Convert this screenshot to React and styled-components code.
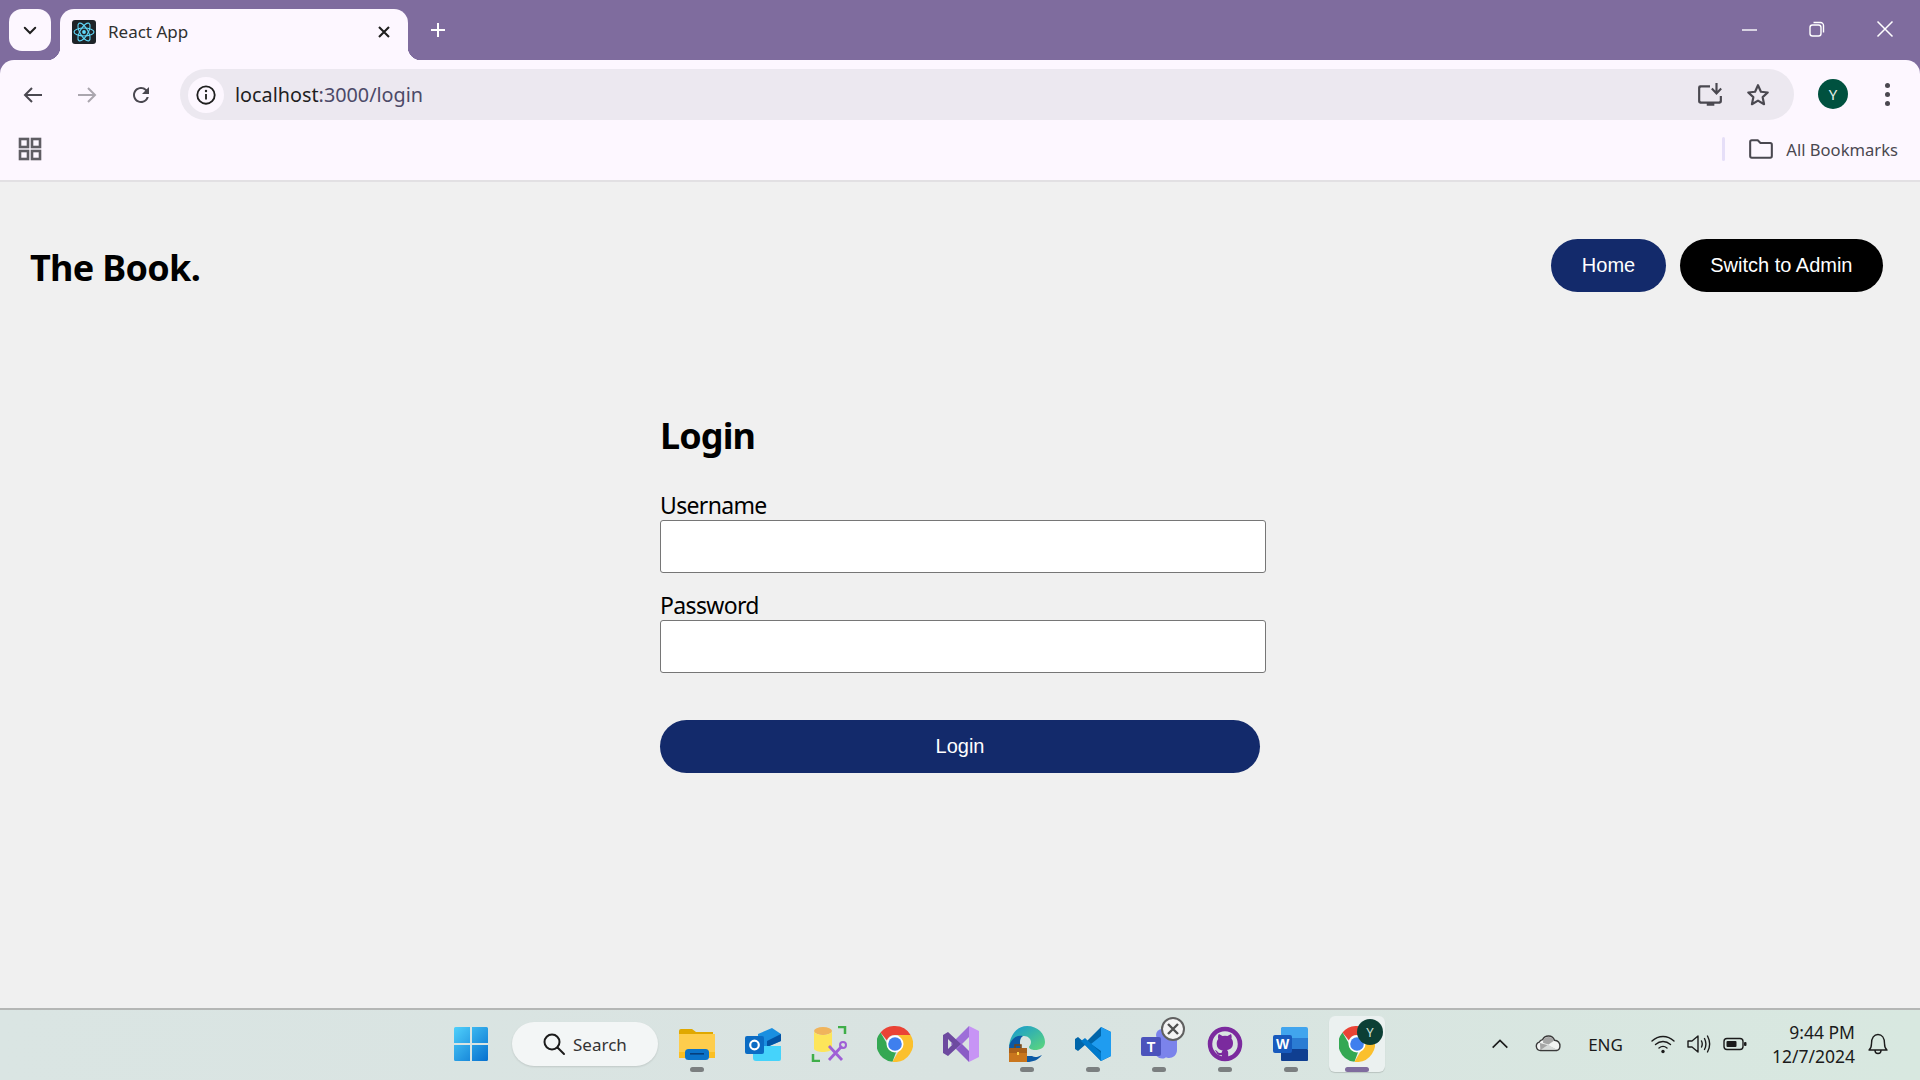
import React from 'react'
import styled, { createGlobalStyle } from 'styled-components'

const UI = `"Noto Sans", "Open Sans", sans-serif`
const ARIAL = `"Liberation Sans", Arial, sans-serif`

const GlobalStyle = createGlobalStyle`
  html, body { margin: 0; padding: 0; height: 100%; }
  body { font-family: ${UI}; background: #f0f0f0; overflow: hidden; }
  #root { height: 100%; }
  * { box-sizing: border-box; }
`

const Ico = ({ size = 24, vb = '0 0 24 24', fill = 'currentColor', children, ...rest }) => (
  <svg width={size} height={size} viewBox={vb} fill={fill} {...rest}>{children}</svg>
)

const App = () => (
  <>
    <GlobalStyle />
    <Screen>
      <TabStrip>
        <TabSearch>
          <Ico size={18} fill="none" stroke="#1f1f1f" strokeWidth="2.6" strokeLinecap="round"><path d="M5 9l7 7 7-7" /></Ico>
        </TabSearch>
        <Tab>
          <Favicon>
            <Ico size={24} fill="none" stroke="#61dafb" strokeWidth="1.1">
              <circle cx="12" cy="12" r="1.9" fill="#61dafb" stroke="none" />
              <ellipse cx="12" cy="12" rx="10" ry="4" />
              <ellipse cx="12" cy="12" rx="10" ry="4" transform="rotate(60 12 12)" />
              <ellipse cx="12" cy="12" rx="10" ry="4" transform="rotate(120 12 12)" />
            </Ico>
          </Favicon>
          <TabTitle>React App</TabTitle>
          <TabClose>
            <Ico size={16} vb="0 0 16 16" fill="none" stroke="#1f1f1f" strokeWidth="2.1"><path d="M3 3l10 10M13 3L3 13" /></Ico>
          </TabClose>
        </Tab>
        <NewTab>
          <Ico size={20} vb="0 0 20 20" fill="none" stroke="#fff" strokeWidth="2"><path d="M10 3v14M3 10h14" /></Ico>
        </NewTab>
        <WinControls>
          <WinBtn><Ico size={18} vb="0 0 18 18" fill="none" stroke="#fff" strokeWidth="1.4"><path d="M2 10h15" /></Ico></WinBtn>
          <WinBtn><Ico size={18} vb="0 0 18 18" fill="none" stroke="#fff" strokeWidth="1.4"><rect x="2" y="5" width="11" height="11" rx="2.5" /><path d="M5.5 2.5h7a3 3 0 013 3v7" /></Ico></WinBtn>
          <WinBtn><Ico size={18} vb="0 0 18 18" fill="none" stroke="#fff" strokeWidth="1.5"><path d="M1.5 1.5l15 15M16.5 1.5l-15 15" /></Ico></WinBtn>
        </WinControls>
      </TabStrip>

      <Toolbar>
        <NavIcon><Ico size={24} fill="none" stroke="#4a4850" strokeWidth="2"><path d="M21 12H4M11 5l-7 7 7 7" /></Ico></NavIcon>
        <NavIcon><Ico size={24} fill="none" stroke="#aaa6ae" strokeWidth="2"><path d="M3 12h17M13 5l7 7-7 7" /></Ico></NavIcon>
        <NavIcon><Ico size={24} fill="#4a4850"><path d="M17.65 6.35A7.958 7.958 0 0012 4c-4.42 0-7.99 3.58-7.99 8s3.57 8 7.99 8c3.73 0 6.84-2.55 7.73-6h-2.08A5.99 5.99 0 0112 18c-3.31 0-6-2.69-6-6s2.69-6 6-6c1.66 0 3.14.69 4.22 1.78L13 11h7V4l-2.35 2.35z" /></Ico></NavIcon>
        <Omnibox>
          <SiteInfo>
            <Ico size={22} fill="none" stroke="#1f1f1f" strokeWidth="2"><circle cx="12" cy="12" r="9.5" /><path d="M12 11v6" /><circle cx="12" cy="7.6" r="1.3" fill="#1f1f1f" stroke="none" /></Ico>
          </SiteInfo>
          <Url>localhost<UrlRest>:3000/login</UrlRest></Url>
          <OmniActions>
            <Ico size={26} fill="#4a4850">
              <path d="M3 3h9v2H4a1 1 0 00-1 1v11a1 1 0 001 1h16a1 1 0 001-1v-4h2v5a2 2 0 01-2 2h-5v2H9v-2H3a2 2 0 01-2-2V5a2 2 0 012-2z" />
              <path d="M17 1h2v7l2.6-2.6L23 6.8 18 12l-5-5.2 1.4-1.4L17 8z" />
            </Ico>
            <Ico size={26} fill="none" stroke="#4a4850" strokeWidth="2" strokeLinejoin="round"><path d="M12 3l2.7 6 6.3.7-4.700 4.300 1.300 6.500L12 17.200 6.400 20.500l1.300-6.500L3 9.700 9.300 9z" /></Ico>
          </OmniActions>
        </Omnibox>
        <Avatar>Y</Avatar>
        <MoreDots><i /><i /><i /></MoreDots>
      </Toolbar>

      <BookmarkBar>
        <Ico size={24} fill="none" stroke="#5f5d63" strokeWidth="2.6"><rect x="2" y="2" width="8" height="8" /><rect x="14" y="2" width="8" height="8" /><rect x="2" y="14" width="8" height="8" /><rect x="14" y="14" width="8" height="8" /></Ico>
        <BarDivider />
        <Ico size={26} fill="none" stroke="#4a4850" strokeWidth="1.9" strokeLinejoin="round"><path d="M2 5.500A1.500 1.500 0 013.500 4H9l2.500 2.500h9A1.500 1.500 0 0122 8v10.500a1.500 1.500 0 01-1.500 1.500h-17A1.500 1.500 0 012 18.500z" /></Ico>
        <AllBookmarks>All Bookmarks</AllBookmarks>
      </BookmarkBar>

      <Page>
        <Header>
          <Logo>The Book.</Logo>
          <HeaderNav>
            <PillButton $bg="#132a6b">Home</PillButton>
            <PillButton $bg="#000">Switch to Admin</PillButton>
          </HeaderNav>
        </Header>
        <LoginForm onSubmit={e => e.preventDefault()}>
          <Title>Login</Title>
          <Field>
            <FieldLabel htmlFor="username">Username</FieldLabel>
            <FieldInput id="username" type="text" />
          </Field>
          <Field>
            <FieldLabel htmlFor="password">Password</FieldLabel>
            <FieldInput id="password" type="password" />
          </Field>
          <SubmitButton type="submit">Login</SubmitButton>
        </LoginForm>
      </Page>

      <Taskbar>
        <Pinned>
          <Slot>
            <Ico size={36} vb="0 0 36 36" fill="none">
              <defs><linearGradient id="win" x1="0" y1="0" x2="1" y2="1"><stop offset="0" stopColor="#4fd0fb" /><stop offset="1" stopColor="#0670cf" /></linearGradient></defs>
              <path fill="url(#win)" d="M1 2.500A1.500 1.500 0 012.500 1H17v16H1zM19 1h14.500A1.500 1.500 0 0135 2.500V17H19zM1 19h16v16H2.500A1.500 1.500 0 011 33.500zM19 19h16v14.500a1.500 1.500 0 01-1.500 1.500H19z" />
            </Ico>
          </Slot>
          <SearchBox>
            <Ico size={24} fill="none" stroke="#1b1b1b" strokeWidth="2" strokeLinecap="round"><circle cx="10" cy="10" r="7.5" /><path d="M15.500 15.500L22 22" /></Ico>
            <span>Search</span>
          </SearchBox>
          <Slot $dot>
            <Ico size={36} vb="0 0 36 36" fill="none">
              <path fill="#e0a800" d="M0 5a2 2 0 012-2h11l4 3h17v6H0z" />
              <path fill="#fecd4d" d="M0 8h36v24H0z" />
              <path fill="#fbbf24" d="M0 26h36v6H0z" />
              <rect x="6" y="23" width="24" height="11" rx="3.500" fill="#0b73c9" />
              <rect x="11" y="27" width="14" height="1.600" fill="#063f7c" />
            </Ico>
          </Slot>
          <Slot>
            <Ico size={36} vb="0 0 36 36" fill="none">
              <path fill="#1a8fe0" d="M13 8l14-6 9 6v7l-14 6H13z" />
              <path fill="#0353a4" d="M22 15l14-7v7l-14 6z" />
              <path fill="#45d3fb" d="M8 20h28v13a2 2 0 01-2 2H11a3 3 0 01-3-3z" />
              <rect x="0" y="10" width="19" height="18" rx="2" fill="#0b6cc4" />
              <circle cx="9.500" cy="19" r="4.300" fill="none" stroke="#fff" strokeWidth="2.200" />
            </Ico>
          </Slot>
          <Slot>
            <Ico size={36} vb="0 0 36 36" fill="none">
              <ellipse cx="12" cy="5" rx="9" ry="4" fill="#f0b45c" />
              <path fill="#fde55a" d="M3 5c0 2 4 4 9 4s9-2 9-4v18c-2 4-16 4-18 0z" />
              <path d="M27 1h7v7M2 28v7h7" stroke="#3fae49" strokeWidth="2.500" />
              <path d="M18 34l13-14M31 34L18 20" stroke="#9f5fd6" strokeWidth="2.800" />
              <circle cx="32" cy="19" r="3" fill="none" stroke="#9f5fd6" strokeWidth="2" />
            </Ico>
          </Slot>
          <Slot>
            <ChromeLogo />
          </Slot>
          <Slot>
            <Ico size={36} vb="0 0 36 36" fill="none">
              <path fill="#8a5cc6" d="M26 36L8 18l6-5 12 12z" />
              <path fill="#9d6fd8" d="M26 0L8 18l6 5 12-12z" />
              <path fill="#c794f5" d="M26 0l10 5v26l-10 5z" />
              <path fill="#6d4a9f" fillRule="evenodd" d="M0 9l5-3 13 12L5 30l-5-3zM5 13v10l5-5z" />
            </Ico>
          </Slot>
          <Slot $dot>
            <Ico size={36} vb="0 0 36 36" fill="none">
              <defs><linearGradient id="edge" x1="0" y1="0" x2="1" y2="1"><stop offset="0" stopColor="#1497d4" /><stop offset="1" stopColor="#5fd87a" /></linearGradient></defs>
              <path fill="url(#edge)" d="M18 0c11 0 18 8 18 16 0 6-5 8-10 8-3 0-6-1-6-3 0-1 2-2 2-5 0-3-3-6-7-6-6 0-11 4-15 11C1 9 8 0 18 0z" />
              <path fill="#0c59a4" d="M4 13c3-3 6-4 10-3-3 2-4 6-2 12H0c0-4 2-7 4-9zM14 30h9c3 2 6 1 10-1-4 5-9 7-15 7-2 0-3 0-4-1z" />
              <rect x="0" y="22" width="18" height="14" fill="#c9761d" />
              <rect x="0" y="22" width="18" height="5" fill="#a9601a" />
              <rect x="8" y="26" width="2" height="3" fill="#ffd54a" />
              <path d="M6 22v-3h6v3" stroke="#7a4410" strokeWidth="1.500" />
            </Ico>
          </Slot>
          <Slot $dot>
            <Ico size={36} vb="0 0 36 36" fill="none">
              <path fill="#0065a9" d="M26 1L10 17 3 11 0 13v10l3 2 7-6 16 16 10-5V6z" />
              <path fill="#1f9cf0" d="M26 1l10 5v24l-10 5V25L16 18l10-8z" />
              <path fill="#007acc" d="M26 35L6 15l4-3 16 15z" />
            </Ico>
          </Slot>
          <Slot $dot>
            <Ico size={36} vb="0 0 36 36" fill="none">
              <circle cx="29" cy="10" r="4.500" fill="#7b83eb" />
              <circle cx="21" cy="9" r="6" fill="#7b83eb" />
              <path fill="#7b83eb" d="M13 13h23v11c0 5-4 8-8 8-2 0-3-1-4 0-5 2-11-2-11-8z" />
              <rect x="0" y="11" width="20" height="19" rx="2" fill="#4b53bc" />
              <text x="10" y="26" textAnchor="middle" fontFamily={ARIAL} fontWeight="700" fontSize="14" fill="#fff">T</text>
            </Ico>
            <CloseBadge>
              <Ico size={14} vb="0 0 14 14" fill="none" stroke="#505050" strokeWidth="2.400"><path d="M2 2l10 10M12 2L2 12" /></Ico>
            </CloseBadge>
          </Slot>
          <Slot $dot>
            <Ico size={36} vb="0 0 36 36" fill="none">
              <circle cx="18" cy="18" r="15" stroke="#7b2a9e" strokeWidth="4.500" />
              <path fill="#7b2a9e" d="M12 8l3.500 2a12 12 0 015 0L24 8c.8 1.800.8 3.500.4 4.500 1.100 1.300 1.600 2.700 1.600 4.500 0 4.500-2.500 6.500-6 7 1 .8 1.200 2 1.200 3v5h-6.400v-3c-3.200.6-4.500-.6-5.300-2.600-.4-.9-1-1.500-1.800-2 1.400-.3 2.400.7 3 1.700.8 1.200 2.200 1.200 4 .7.100-.9.400-1.800 1-2.300-3.500-.5-6-2.500-6-7 0-1.800.5-3.200 1.600-4.500-.4-1-.5-2.700.2-4.500z" />
            </Ico>
          </Slot>
          <Slot $dot>
            <Ico size={36} vb="0 0 36 36" fill="none">
              <path fill="#41a5ee" d="M9 1h24a2 2 0 012 2v9H8V2z" />
              <rect x="8" y="12" width="27" height="11" fill="#2b7cd3" />
              <rect x="8" y="23" width="27" height="12" rx="1" fill="#103f91" />
              <rect x="0" y="9" width="19" height="18" rx="2" fill="#185abd" />
              <text x="9.500" y="23" textAnchor="middle" fontFamily={ARIAL} fontWeight="700" fontSize="14" fill="#fff">W</text>
            </Ico>
          </Slot>
          <ActiveSlot>
            <ChromeLogo />
            <ProfileBadge>Y</ProfileBadge>
          </ActiveSlot>
        </Pinned>
        <Tray>
          <Ico size={22} fill="none" stroke="#1b1b1b" strokeWidth="1.800"><path d="M4 16l8-8 8 8" /></Ico>
          <CloudSlot>
            <Ico size={26} fill="none">
              <path fill="#f2f4f3" stroke="#3a3a3a" strokeWidth="1.300" d="M7 8a6 6 0 0111 .5 5 5 0 015 5.500c0 2-1 3.500-3 4H5a4 4 0 01-1-7.800C4.500 9 5.500 8.300 7 8z" />
              <path fill="#8b8b8b" d="M7.500 8.600a5.500 5.500 0 0110 .4l-5 3.500-5-1.500zM4.500 11l7 2 9 4.500H5z" opacity=".75" />
              <path fill="#d8dbda" d="M5.500 17.300l6.500-4.500 8 4.500z" />
            </Ico>
          </CloudSlot>
          <Lang>ENG</Lang>
          <StatusIcons>
            <Ico size={24} fill="none" stroke="#1b1b1b" strokeWidth="1.400" strokeLinecap="round"><path d="M1 9c6.500-6 15.500-6 22 0M4.500 12.500c4.500-4 10.500-4 15 0M8 16c2.500-2 5.500-2 8 0" /><circle cx="12" cy="19.500" r="1.700" fill="#1b1b1b" stroke="none" /></Ico>
            <Ico size={24} fill="none" stroke="#1b1b1b" strokeWidth="1.400" strokeLinejoin="round" strokeLinecap="round"><path d="M1 9v6h4l6 5V4L5 9zM14.500 9c1 2 1 4 0 6M17.500 6.500c1.800 3.500 1.800 7.500 0 11M20.500 4c2.700 5 2.700 11 0 16" /></Ico>
            <Ico size={24} fill="none"><rect x="1" y="6.500" width="19" height="11" rx="3" stroke="#1b1b1b" strokeWidth="1.400" /><rect x="3.500" y="9" width="10" height="6" rx="1" fill="#1b1b1b" /><rect x="21" y="10" width="2.500" height="4" rx="1" fill="#1b1b1b" /></Ico>
          </StatusIcons>
          <Clock><span>9:44 PM</span><span>12/7/2024</span></Clock>
          <Ico size={24} fill="none" stroke="#1b1b1b" strokeWidth="1.400" strokeLinejoin="round"><path d="M3 18c2-1.500 2.500-3 2.500-6.500C5.500 6 8 2.500 12 2.500S18.500 6 18.500 11.500c0 3.500.5 5 2.500 6.500zM9 18.500a3 3 0 006 0" /></Ico>
        </Tray>
      </Taskbar>
    </Screen>
  </>
)

const ChromeLogo = () => (
  <Ico size={36} vb="0 0 36 36" fill="none">
    <path fill="#ea4335" d="M18 0a18 18 0 0115.600 9H18a9 9 0 00-8.200 5.300L3.500 6.500A18 18 0 0118 0z" />
    <path fill="#34a853" d="M3.500 6.500l7 12c1.500 3 4.200 5.500 9.500 5l-4.500 12.300A18 18 0 013.500 6.500z" />
    <path fill="#fbc02d" d="M33.600 9A18 18 0 0115.500 35.800l7.700-13.300A9 9 0 0024 13c-.8-1.500-2-3-3.500-4z" />
    <circle cx="18" cy="18" r="8.500" fill="#fff" />
    <circle cx="18" cy="18" r="6.800" fill="#3f7fee" />
  </Ico>
)

export default App

const Screen = styled.div`
  width: 1920px;
  height: 1080px;
  display: flex;
  flex-direction: column;
  background: #7f6c9e;
  overflow: hidden;
`

const TabStrip = styled.div`
  height: 60px;
  flex: none;
  display: flex;
  align-items: flex-end;
  padding-left: 9px;
  background: #7f6c9e;
`

const TabSearch = styled.div`
  position: relative;
  z-index: 1;
  width: 42px;
  height: 42px;
  margin-bottom: 9px;
  border-radius: 13px;
  background: #fdf7ff;
  display: flex;
  align-items: center;
  justify-content: center;
`

const Tab = styled.div`
  position: relative;
  width: 348px;
  height: 51px;
  margin-left: 9px;
  padding: 0 16px 6px 12px;
  display: flex;
  align-items: center;
  background: #fdf7ff;
  border-radius: 14px 14px 0 0;

  &::before, &::after {
    content: '';
    position: absolute;
    bottom: 0;
    width: 13px;
    height: 13px;
  }
  &::before {
    left: -13px;
    background: radial-gradient(circle at 0 0, #7f6c9e 13px, #fdf7ff 13.5px);
  }
  &::after {
    right: -13px;
    background: radial-gradient(circle at 100% 0, #7f6c9e 13px, #fdf7ff 13.5px);
  }
`

const Favicon = styled.div`
  width: 24px;
  height: 24px;
  border-radius: 3px;
  background: #1e2428;
  display: flex;
`

const TabTitle = styled.span`
  margin-left: 12px;
  flex: 1;
  font-size: 17px;
  color: #303030;
`

const TabClose = styled.div`
  display: flex;
`

const NewTab = styled.div`
  margin: 0 0 9px 20px;
  height: 42px;
  display: flex;
  align-items: center;
`

const WinControls = styled.div`
  margin-left: auto;
  height: 60px;
  display: flex;
  align-self: flex-start;
  padding-right: 26px;
  gap: 50px;
  align-items: center;
  margin-top: -1px;
`

const WinBtn = styled.div`
  width: 18px;
  height: 18px;
  display: flex;
`

const Toolbar = styled.div`
  height: 60px;
  flex: none;
  display: flex;
  align-items: flex-start;
  padding: 9px 0 0 21px;
  background: #fdf7ff;
  border-radius: 14px 14px 0 0;
`

const NavIcon = styled.div`
  width: 24px;
  height: 51px;
  margin-right: 30px;
  display: flex;
  align-items: center;
  &:nth-of-type(3) { margin-right: 28px; }
`

const Omnibox = styled.div`
  width: 1614px;
  height: 51px;
  margin-left: -1px;
  border-radius: 26px;
  background: #ece8f0;
  display: flex;
  align-items: center;
  padding: 0 23px 0 8px;
`

const SiteInfo = styled.div`
  width: 36px;
  height: 36px;
  border-radius: 50%;
  background: #fdf7ff;
  display: flex;
  align-items: center;
  justify-content: center;
`

const Url = styled.span`
  margin-left: 11px;
  font-size: 19.8px;
  color: #1f1f1f;
`

const UrlRest = styled.span`
  color: #4c4a68;
`

const OmniActions = styled.div`
  margin-left: auto;
  display: flex;
  gap: 22px;
  align-items: center;
`

const Avatar = styled.div`
  width: 30px;
  height: 30px;
  margin: 10px 0 0 24px;
  border-radius: 50%;
  background: #00513f;
  color: #e6efe9;
  font-size: 15px;
  display: flex;
  align-items: center;
  justify-content: center;
`

const MoreDots = styled.div`
  margin: 14px 0 0 37px;
  display: flex;
  flex-direction: column;
  gap: 4px;
  i {
    width: 5px;
    height: 5px;
    border-radius: 50%;
    background: #4a4850;
    display: block;
  }
`

const BookmarkBar = styled.div`
  height: 62px;
  flex: none;
  display: flex;
  align-items: center;
  padding: 0 22px 2px 18px;
  background: #fdf7ff;
  border-bottom: 2px solid #e2e0e3;
`

const BarDivider = styled.div`
  width: 3px;
  height: 24px;
  margin-left: auto;
  margin-right: 23px;
  background: #e6dff8;
  border-radius: 2px;
`

const AllBookmarks = styled.span`
  margin-left: 12px;
  font-size: 16.6px;
  color: #4a4850;
`

const Page = styled.main`
  flex: 1;
  background: #f0f0f0;
  display: flex;
  flex-direction: column;
  border-bottom: 2px solid #b4b6b5;
`

const Header = styled.header`
  display: flex;
  align-items: center;
  justify-content: space-between;
  padding: 56px 37px 0 30px;
`

const Logo = styled.h1`
  margin: 5px 0 0;
  font-size: 36px;
  letter-spacing: -0.7px;
  font-weight: 700;
  color: #000;
`

const HeaderNav = styled.nav`
  display: flex;
  gap: 14px;
`

const PillButton = styled.button`
  height: 53px;
  padding: 0 30.5px;
  border: 0;
  border-radius: 27px;
  background: ${p => p.$bg};
  color: #fff;
  font: 20px ${ARIAL};
`

const LoginForm = styled.form`
  width: 606px;
  margin: 120px 0 0 660px;
  display: flex;
  flex-direction: column;
`

const Title = styled.h2`
  margin: 0 0 29px;
  font-size: 36px;
  letter-spacing: -0.9px;
  line-height: 48px;
  font-weight: 700;
  color: #000;
`

const Field = styled.div`
  display: flex;
  flex-direction: column;
  margin-bottom: 16px;
`

const FieldLabel = styled.label`
  font-size: 23px;
  letter-spacing: -0.65px;
  line-height: 33px;
  height: 31px;
  color: #000;
`

const FieldInput = styled.input`
  height: 53px;
  width: 606px;
  background: #fff;
  border: 1px solid #767676;
  border-radius: 3px;
`

const SubmitButton = styled.button`
  width: 600px;
  height: 53px;
  margin-top: 31px;
  border: 0;
  border-radius: 27px;
  background: #132a6b;
  color: #fff;
  font: 20px ${ARIAL};
`

const Taskbar = styled.footer`
  height: 70px;
  flex: none;
  display: flex;
  align-items: center;
  padding-bottom: 2px;
  background: linear-gradient(90deg, #dae5e3, #d9e3e1 50%, #d8e8e0);
`

const Pinned = styled.div`
  display: flex;
  align-items: center;
  margin-left: 441px;
`

const Slot = styled.div`
  position: relative;
  width: 60px;
  height: 68px;
  display: flex;
  align-items: center;
  justify-content: center;
  margin-right: 6px;
  &::after {
    content: '';
    display: ${p => (p.$dot ? 'block' : 'none')};
    position: absolute;
    left: 23px;
    bottom: 6px;
    width: 14px;
    height: 5px;
    border-radius: 3px;
    background: #7b7f80;
  }
`

const SearchBox = styled.div`
  width: 146px;
  height: 44px;
  margin: 0 9px 0 5px;
  border-radius: 22px;
  background: #f3f6f6;
  box-shadow: 0 1px 2px rgba(0, 0, 0, 0.12);
  display: flex;
  align-items: center;
  padding-left: 30px;
  gap: 7px;
  font-size: 17px;
  color: #333;
`

const CloseBadge = styled.div`
  position: absolute;
  top: 7px;
  right: 4px;
  width: 24px;
  height: 24px;
  border-radius: 50%;
  background: #f4f4f4;
  border: 2px solid #606060;
  display: flex;
  align-items: center;
  justify-content: center;
`

const ActiveSlot = styled.div`
  position: relative;
  width: 56px;
  height: 56px;
  margin-left: 2px;
  border-radius: 6px;
  background: #ebf1f0;
  box-shadow: 0 1px 1px rgba(0, 0, 0, 0.15);
  display: flex;
  align-items: center;
  justify-content: center;
  &::after {
    content: '';
    position: absolute;
    left: 16px;
    bottom: 0;
    width: 24px;
    height: 5px;
    border-radius: 3px;
    background: #7f6c9e;
  }
`

const ProfileBadge = styled.div`
  position: absolute;
  top: 3px;
  right: 2px;
  width: 26px;
  height: 26px;
  border-radius: 50%;
  background: #0c3f35;
  color: #cfe0d8;
  font-size: 13px;
  display: flex;
  align-items: center;
  justify-content: center;
`

const Tray = styled.div`
  margin-left: auto;
  padding-right: 30px;
  display: flex;
  align-items: center;
  color: #1b1b1b;
`

const CloudSlot = styled.div`
  margin-left: 24px;
  display: flex;
`

const Lang = styled.span`
  margin: 0 28px 0 27px;
  font-size: 17px;
`

const StatusIcons = styled.div`
  display: flex;
  gap: 12px;
  margin-right: 25px;
`

const Clock = styled.div`
  display: flex;
  flex-direction: column;
  align-items: flex-end;
  margin-right: 11px;
  font-size: 17.5px;
  line-height: 24px;
`
